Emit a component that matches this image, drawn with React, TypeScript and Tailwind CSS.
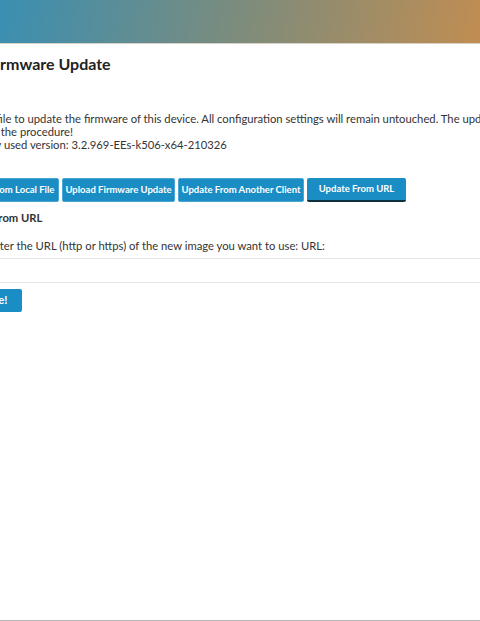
const BUTTONS = [
  { label: "Update From Local File", active: false, width: "w-[106px]" },
  { label: "Upload Firmware Update", active: false, width: "w-[113px]" },
  { label: "Update From Another Client", active: false, width: "w-[126px]" },
  { label: "Update From URL", active: true, width: "w-[99px]" },
];

export default function App() {
  return (
    <div className="h-[621px] w-[480px] overflow-hidden flex flex-col bg-white text-[#333] font-['Lato','Liberation_Sans',sans-serif]">
      {/* Header */}
      <header className="h-[44px] shrink-0 border-b border-[#d6d2c8] bg-[linear-gradient(100deg,#3a8fb2_0%,#7d8c7c_50%,#c08d52_100%)]" />

      {/* Main */}
      <main className="flex-1 -ml-[47px] w-[800px]">
        <h1 className="pl-[34px] mt-[10px] text-[16px] leading-[20px] font-bold text-[#222]">
          Firmware Update
        </h1>

        <p className="ml-[2px] mt-[38px] text-[11.25px] leading-[13px] whitespace-nowrap">
          <span className="block">
            Select a file to update the firmware of this device. All configuration settings will remain untouched. The update can take some time. Do not turn the device
          </span>
          <span className="block -ml-[5px]">off during the procedure!</span>
          <span className="block">Currently used version: 3.2.969-EEs-k506-x64-210326</span>
        </p>

        <div className="mt-[27px] flex gap-[3px]">
          {BUTTONS.map((b) => (
            <button
              key={b.label}
              className={`h-[24px] ${b.width} rounded-[2px] bg-[#1a8dc5] text-white text-[9.5px] font-bold whitespace-nowrap ${
                b.active ? "border-b-2 border-[#10303f]" : "border border-[#4aa6d4]"
              }`}
            >
              {b.label}
            </button>
          ))}
        </div>

        <h2 className="mt-[8px] text-[11.25px] leading-[16px] font-bold">
          Update From URL
        </h2>

        <p className="mt-[13px] text-[11.25px] leading-[14px]">
          Please enter the URL (http or https) of the new image you want to use: URL:
        </p>

        <input
          type="text"
          className="mt-[5px] block h-[25px] w-[760px] border border-[#e4e4e4] bg-white outline-none"
        />

        <button className="mt-[6px] block h-[23px] w-[69px] rounded-[2px] bg-[#1a8dc5] text-white text-[11.25px] font-bold">
          Update!
        </button>
      </main>

      {/* Footer */}
      <footer className="h-[1px] shrink-0 bg-[#b4b4b4]" />
    </div>
  );
}
